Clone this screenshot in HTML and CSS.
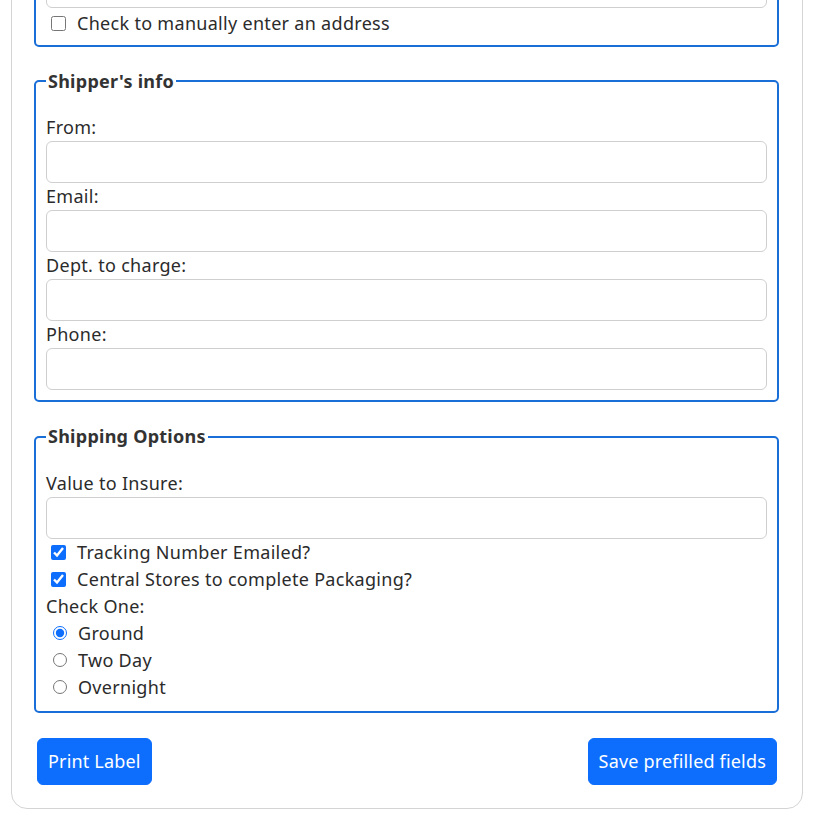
FILE: index.html
```html
<!DOCTYPE html>
<html lang="en">
<head>
<meta charset="utf-8">
<title>Shipping Label</title>
<link rel="stylesheet" href="styles.css">
</head>
<body>
<form class="card">
  <fieldset class="group group-first">
    <input class="field-input" type="text" aria-label="Address">
    <label class="check-row check-row-first"><input class="check" type="checkbox"><span>Check to manually enter an address</span></label>
  </fieldset>

  <fieldset class="group">
    <legend class="group-title">Shipper's info</legend>
    <label class="field-label" for="from">From:</label>
    <input class="field-input" id="from" type="text">
    <label class="field-label" for="email">Email:</label>
    <input class="field-input" id="email" type="text">
    <label class="field-label" for="dept">Dept. to charge:</label>
    <input class="field-input" id="dept" type="text">
    <label class="field-label" for="phone">Phone:</label>
    <input class="field-input" id="phone" type="text">
  </fieldset>

  <fieldset class="group">
    <legend class="group-title">Shipping Options</legend>
    <label class="field-label" for="insure">Value to Insure:</label>
    <input class="field-input" id="insure" type="text">
    <label class="check-row"><input class="check" type="checkbox" checked><span>Tracking Number Emailed?</span></label>
    <label class="check-row"><input class="check" type="checkbox" checked><span>Central Stores to complete Packaging?</span></label>
    <div class="field-label">Check One:</div>
    <label class="check-row"><input class="radio" type="radio" name="speed" checked><span>Ground</span></label>
    <label class="check-row"><input class="radio" type="radio" name="speed"><span>Two Day</span></label>
    <label class="check-row"><input class="radio" type="radio" name="speed"><span>Overnight</span></label>
  </fieldset>

  <div class="actions">
    <button class="btn" type="button">Print Label</button>
    <button class="btn" type="button">Save prefilled fields</button>
  </div>
</form>
</body>
</html>
```

FILE: styles.css
```css
html, body {
  margin: 0;
  padding: 0;
  background: #ffffff;
}

body {
  font-family: "Noto Sans", "Open Sans", sans-serif;
  font-size: 18px;
  line-height: 27px;
  letter-spacing: 0.3px;
  color: #212529;
}

.card {
  display: block;
  margin: -69.5px 15px 0 11px;
  padding: 22px 23px 23.5px 22px;
  border: 1px solid #d4d4d4;
  border-radius: 16px;
  background: #ffffff;
}

.group {
  margin: 0 0 21px 0;
  padding: 19.5px 10px 10px 10px;
  border: 2px solid #1a6ed8;
  border-radius: 5px;
  min-width: 0;
}

.group-first {
  padding: 10px 10px 8px 10px;
}

.group-title {
  padding: 0 2px;
  font-size: 18px;
  line-height: 27px;
  font-weight: 700;
  letter-spacing: 0.25px;
  color: #333333;
}

.field-label {
  display: block;
  line-height: 27px;
  color: #2b2b2b;
}

.field-input {
  display: block;
  box-sizing: border-box;
  width: 100%;
  height: 42px;
  margin: 0;
  padding: 6px 12px;
  border: 1px solid #cfcfcf;
  border-radius: 6px;
  background: #ffffff;
  font: inherit;
}

.check-row {
  display: flex;
  align-items: center;
  height: 27px;
  color: #2b2b2b;
}

.check-row-first {
  margin-top: 2px;
}

.check {
  width: 15px;
  height: 15px;
  margin: 0 11px 0 5px;
  accent-color: #0d6efd;
}

.radio {
  width: 14.5px;
  height: 14.5px;
  margin: 0 11px 0 6.5px;
  accent-color: #0d6efd;
}

.actions {
  display: flex;
  justify-content: space-between;
  margin-top: 25px;
  padding: 0 2px 0 3px;
}

.btn {
  padding: 9px 10px;
  border: 1px solid #0d6efd;
  border-radius: 6px;
  background: #0d6efd;
  color: #ffffff;
  font-family: inherit;
  font-size: 18px;
  line-height: 27px;
  letter-spacing: 0.18px;
  cursor: pointer;
}
```
